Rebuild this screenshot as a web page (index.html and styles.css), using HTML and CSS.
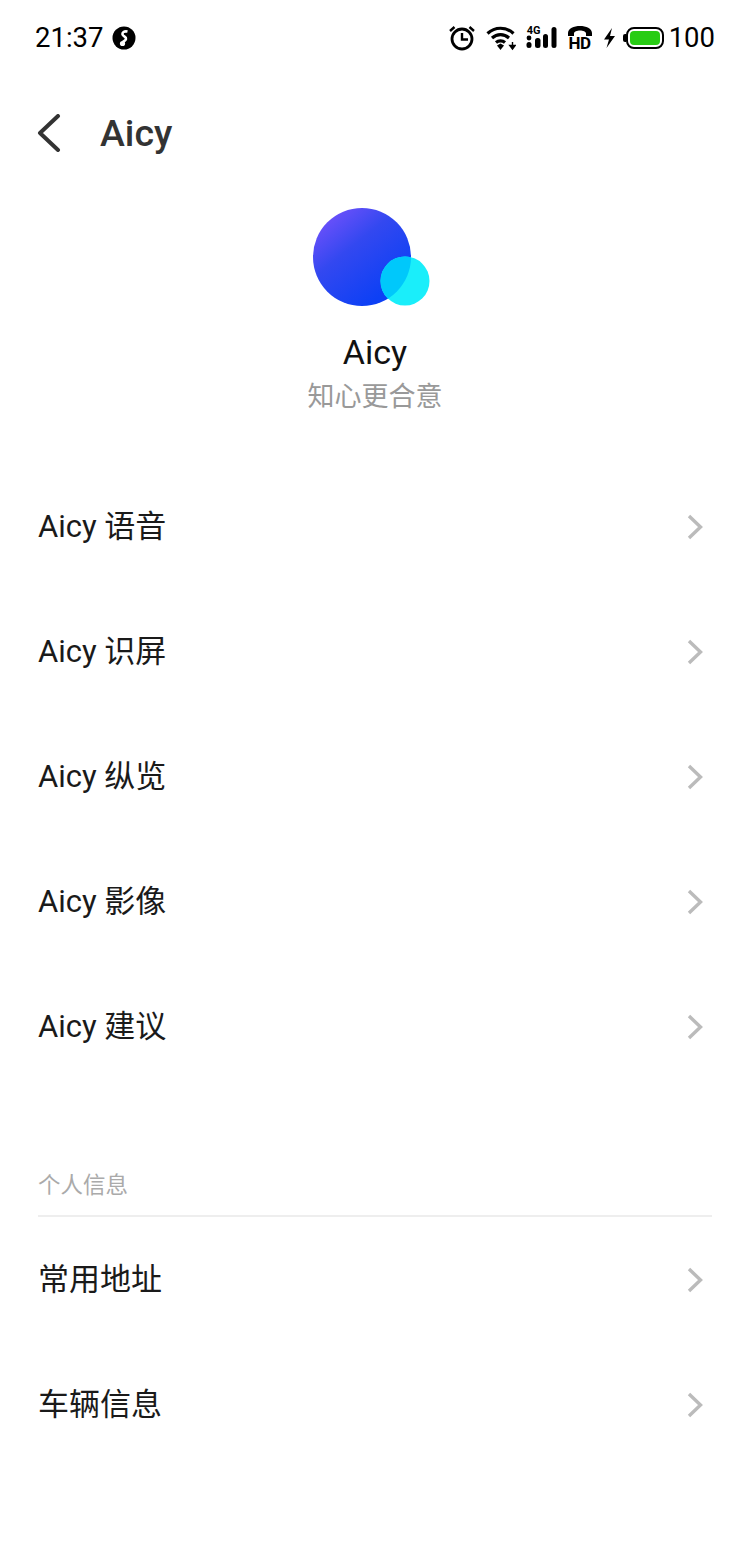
FILE: index.html
```html
<!DOCTYPE html>
<html lang="zh-CN">
<head>
    <meta charset="UTF-8">
    <title>Aicy</title>
    <link rel="stylesheet" href="styles.css">
</head>
<body>
    <div class="statusbar">
        <div class="status-left">
            <span class="time">21:37</span>
            <svg class="vpn" width="24" height="24" viewBox="0 0 24 24">
                <circle cx="12" cy="12" r="11.5" fill="#000"/>
                <path d="M15.5 5.5C12 4.8 10 6.5 10.5 8.5C11 10.5 14.5 10.5 14 13C13.7 14.5 12 15 11 16" fill="none" stroke="#fff" stroke-width="2.6"/>
                <circle cx="10.5" cy="17.5" r="2.6" fill="#fff"/>
            </svg>
        </div>
        <div class="status-right">
            <svg width="28" height="26" viewBox="0 0 28 26">
                <circle cx="14" cy="14" r="10" fill="none" stroke="#000" stroke-width="2.8"/>
                <path d="M14 8V14.5H20" fill="none" stroke="#000" stroke-width="2.4"/>
                <path d="M2 6L6.5 2M26 6L21.5 2" stroke="#000" stroke-width="2.4"/>
            </svg>
            <svg class="wifi" width="30" height="26" viewBox="0 0 30 26">
                <path d="M1.5 8.5C9 1.5 20 1.5 27.5 8.5M6 13C11 8.5 18 8.5 23 13M10 17.5C12.5 15.3 16.5 15.3 19 17.5" fill="none" stroke="#000" stroke-width="3.2"/>
                <path d="M11 20.5L14.5 18.5L18 20.5L14.5 25Z" fill="#000"/>
                <path d="M26.5 17V21M23.8 20.5H29.2L26.5 24Z" stroke="#000" stroke-width="1.4" fill="#000"/>
            </svg>
            <div class="signal">
                <span class="net">4G</span>
                <svg width="31" height="25" viewBox="0 0 31 25">
                    <circle cx="3" cy="13" r="2.4" fill="#000"/>
                    <rect x="0.5" y="17" width="5" height="6" rx="2.5" fill="#000"/>
                    <rect x="9" y="13" width="5.5" height="10" rx="2.5" fill="#000"/>
                    <rect x="17" y="9" width="5" height="14" rx="2.5" fill="#000"/>
                    <rect x="25.5" y="2" width="5" height="21" rx="2.5" fill="#000"/>
                </svg>
            </div>
            <div class="hd">
                <svg width="26" height="12" viewBox="0 0 26 12">
                    <path d="M1 11V8C1 -1.5 25 -1.5 25 8V11H19V8.5C19 4.5 7 4.5 7 8.5V11Z" fill="#000"/>
                </svg>
                <span class="hd-text">HD</span>
            </div>
            <svg class="bolt" width="13" height="22" viewBox="0 0 13 22">
                <path d="M9 1L1 12.5H6L3.5 21L12 9H7Z" fill="#000"/>
            </svg>
            <div class="battery">
                <span class="battery-tip"></span>
                <span class="battery-body"><span class="battery-fill"></span></span>
            </div>
            <span class="percent">100</span>
        </div>
    </div>

    <div class="titlebar">
        <svg width="24" height="38" viewBox="0 0 24 38">
            <path d="M21 2L3 19L21 36" fill="none" stroke="#333" stroke-width="4" stroke-linecap="round" stroke-linejoin="round"/>
        </svg>
        <h1>Aicy</h1>
    </div>

    <div class="hero">
        <svg class="logo" width="118" height="98" viewBox="0 0 118 98">
            <defs>
                <linearGradient id="bigBall" x1="0.15" y1="0.1" x2="0.75" y2="0.85">
                    <stop offset="0" stop-color="#6a50fa"/>
                    <stop offset="0.4" stop-color="#3348f0"/>
                    <stop offset="1" stop-color="#0d40f5"/>
                </linearGradient>
                <clipPath id="bigClip">
                    <circle cx="49" cy="49" r="49"/>
                </clipPath>
            </defs>
            <circle cx="49" cy="49" r="49" fill="url(#bigBall)"/>
            <circle cx="92" cy="73" r="24.5" fill="#1aeefa"/>
            <circle cx="92" cy="73" r="24.5" fill="#00c8fb" clip-path="url(#bigClip)"/>
        </svg>
        <div class="hero-name">Aicy</div>
        <div class="hero-sub">知心更合意</div>
    </div>

    <div class="list">
        <div class="row"><span>Aicy 语音</span><svg class="arrow" width="16" height="26" viewBox="0 0 16 26"><path d="M2 2L13.5 13L2 24" fill="none" stroke="#bbb" stroke-width="3.4"/></svg></div>
        <div class="row"><span>Aicy 识屏</span><svg class="arrow" width="16" height="26" viewBox="0 0 16 26"><path d="M2 2L13.5 13L2 24" fill="none" stroke="#bbb" stroke-width="3.4"/></svg></div>
        <div class="row"><span>Aicy 纵览</span><svg class="arrow" width="16" height="26" viewBox="0 0 16 26"><path d="M2 2L13.5 13L2 24" fill="none" stroke="#bbb" stroke-width="3.4"/></svg></div>
        <div class="row"><span>Aicy 影像</span><svg class="arrow" width="16" height="26" viewBox="0 0 16 26"><path d="M2 2L13.5 13L2 24" fill="none" stroke="#bbb" stroke-width="3.4"/></svg></div>
        <div class="row"><span>Aicy 建议</span><svg class="arrow" width="16" height="26" viewBox="0 0 16 26"><path d="M2 2L13.5 13L2 24" fill="none" stroke="#bbb" stroke-width="3.4"/></svg></div>
    </div>

    <div class="section-title">个人信息</div>

    <div class="list">
        <div class="row"><span>常用地址</span><svg class="arrow" width="16" height="26" viewBox="0 0 16 26"><path d="M2 2L13.5 13L2 24" fill="none" stroke="#bbb" stroke-width="3.4"/></svg></div>
        <div class="row"><span>车辆信息</span><svg class="arrow" width="16" height="26" viewBox="0 0 16 26"><path d="M2 2L13.5 13L2 24" fill="none" stroke="#bbb" stroke-width="3.4"/></svg></div>
    </div>
</body>
</html>
```

FILE: styles.css
```css
* {
    box-sizing: border-box;
    padding: 0;
    margin: 0;
}

body {
    font-family: Roboto, "Noto Sans CJK SC", sans-serif;
    background-color: #fff;
    color: #1a1a1a;
    width: 750px;
    height: 1550px;
    overflow: hidden;
}

/* Status bar */
.statusbar {
    height: 75px;
    padding: 0 35px;
    display: flex;
    align-items: center;
    justify-content: space-between;
    color: #000;
}

.status-left {
    display: flex;
    align-items: center;
    gap: 9px;
}

.time {
    font-size: 27.5px;
    line-height: 32px;
}

.status-right {
    display: flex;
    align-items: center;
    gap: 10px;
}

.signal {
    width: 31px;
    height: 25px;
    position: relative;
}

.signal svg {
    display: block;
}

.net {
    position: absolute;
    left: 1px;
    top: 1px;
    font-size: 11px;
    line-height: 10px;
    font-weight: 700;
}

.hd {
    width: 26px;
    display: flex;
    flex-direction: column;
    align-items: center;
}

.hd svg {
    display: block;
}

.hd-text {
    font-size: 17px;
    line-height: 13px;
    font-weight: 700;
    letter-spacing: -0.5px;
}

.battery {
    margin-left: -3px;
    display: flex;
    align-items: center;
}

.battery-tip {
    width: 3px;
    height: 8px;
    background-color: #000;
    border-radius: 2px 0 0 2px;
}

.battery-body {
    width: 38px;
    height: 22px;
    border: 2px solid #000;
    border-radius: 8px;
    padding: 2px;
    display: flex;
}

.battery-fill {
    flex: 1;
    background-color: #28cc14;
    border-radius: 4px;
}

.percent {
    font-size: 27.5px;
    line-height: 32px;
    margin-left: -5px;
}

/* Title bar */
.titlebar {
    height: 116px;
    padding-left: 37px;
    display: flex;
    align-items: center;
    gap: 39px;
}

.titlebar svg {
    margin-top: -1px;
}

.titlebar h1 {
    font-size: 37.5px;
    font-weight: 500;
    color: #333;
}

/* Logo and name */
.hero {
    height: 273px;
    padding-top: 17px;
    display: flex;
    flex-direction: column;
    align-items: center;
}

.logo {
    margin-left: -6px;
    display: block;
}

.hero-name {
    margin-top: 25px;
    font-size: 34px;
    line-height: 42px;
    color: #111;
}

.hero-sub {
    margin-top: 4px;
    font-size: 27px;
    line-height: 40px;
    color: #999;
}

/* Rows */
.row {
    height: 125px;
    padding: 0 47px 0 38px;
    display: flex;
    align-items: center;
    justify-content: space-between;
    font-size: 31px;
}

.row span {
    margin-top: -7px;
}

.section-title {
    margin: 74px 38px 0;
    height: 54px;
    padding-top: 7px;
    font-size: 22.5px;
    line-height: 30px;
    color: #aaa;
    border-bottom: 2px solid #eee;
}
```
